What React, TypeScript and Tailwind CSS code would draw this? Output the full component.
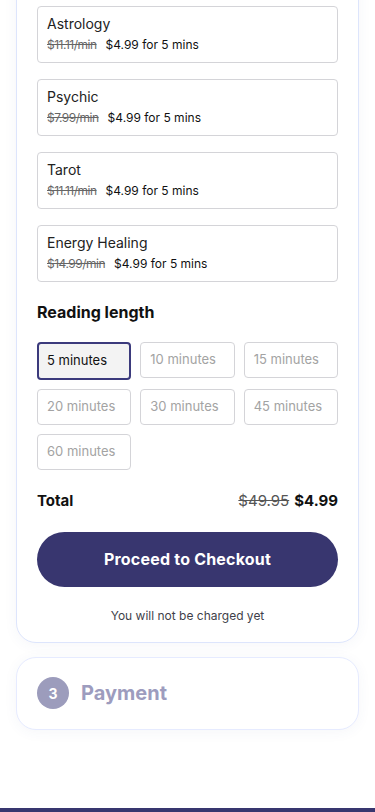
import { useState } from 'react';

type Service = {
  name: string;
  oldRate: string;
};

const SERVICES: Service[] = [
  { name: 'Astrology', oldRate: '$11.11/min' },
  { name: 'Psychic', oldRate: '$7.99/min' },
  { name: 'Tarot', oldRate: '$11.11/min' },
  { name: 'Energy Healing', oldRate: '$14.99/min' },
];

const LENGTHS = [5, 10, 15, 20, 30, 45, 60];

export default function App() {
  const [minutes, setMinutes] = useState(5);

  return (
    <div
      className="min-h-screen flex flex-col bg-white text-[#111]"
      style={{ fontFamily: 'Inter, "Noto Sans", sans-serif' }}
    >
      <div className="flex-1 px-4">
        {/* step 2 card, scrolled so the top is off screen */}
        <div className="-mt-6 pt-[29px] px-[20px] pb-[17px] bg-white border border-[#dde5fc] rounded-b-[20px] shadow-[0_2px_14px_rgba(60,70,140,0.05)]">
          <ul className="flex flex-col gap-4">
            {SERVICES.map(s => (
              <li
                key={s.name}
                className="h-[57px] border border-[#d4d4d8] rounded-[4px] px-[9px] pt-[7px] flex flex-col gap-[3px]"
              >
                <span className="text-[14px] leading-[20px] text-[#222]">{s.name}</span>
                <span className="text-[12px] leading-[16px] flex gap-[9px]">
                  <span className="line-through text-[#666] tracking-[-0.5px]">{s.oldRate}</span>
                  <span className="text-[#111]">$4.99 for 5 mins</span>
                </span>
              </li>
            ))}
          </ul>

          <h3 className="mt-[20px] text-[16px] leading-[20px] font-bold">Reading length</h3>

          <div className="mt-[20px] grid grid-cols-3 gap-x-[9px] gap-y-[9px]">
            {LENGTHS.map(m => {
              const active = m === minutes;
              return (
                <button
                  key={m}
                  onClick={() => setMinutes(m)}
                  className={
                    active
                      ? 'h-[38px] border-2 border-[#3b3a7c] bg-[#f3f3f3] rounded-[4px] text-left pl-[8px] text-[13px] text-[#111]'
                      : 'h-[36px] border border-[#d4d4d8] bg-white rounded-[4px] text-left pl-[9px] text-[13px] text-[#a3a3a3]'
                  }
                >
                  {m} minutes
                </button>
              );
            })}
          </div>

          <div className="mt-[20px] flex items-center justify-between">
            <span className="text-[15px] font-bold">Total</span>
            <span className="text-[15px] flex gap-[5px]">
              <span className="line-through text-[#555]">$49.95</span>
              <span className="font-bold">$4.99</span>
            </span>
          </div>

          <button className="mt-[19px] w-full h-[55px] rounded-full bg-[#38366f] text-white text-[16px] font-bold tracking-[0.2px]">
            Proceed to Checkout
          </button>

          <p className="mt-[20px] text-center text-[12px] text-[#3f3f4a]">
            You will not be charged yet
          </p>
        </div>

        {/* step 3 card */}
        <div className="mt-[14px] h-[73px] px-[20px] flex items-center gap-[12px] bg-white border border-[#e6ebff] rounded-[20px] shadow-[0_2px_14px_rgba(60,70,140,0.05)]">
          <span className="w-[32px] h-[32px] rounded-full bg-[#9c9cbc] text-white text-[14px] font-bold flex items-center justify-center">
            3
          </span>
          <span className="text-[20px] font-bold text-[#9d9cbe]">Payment</span>
        </div>
      </div>

      <div className="h-[4px] bg-[#38366f]" />
    </div>
  );
}
